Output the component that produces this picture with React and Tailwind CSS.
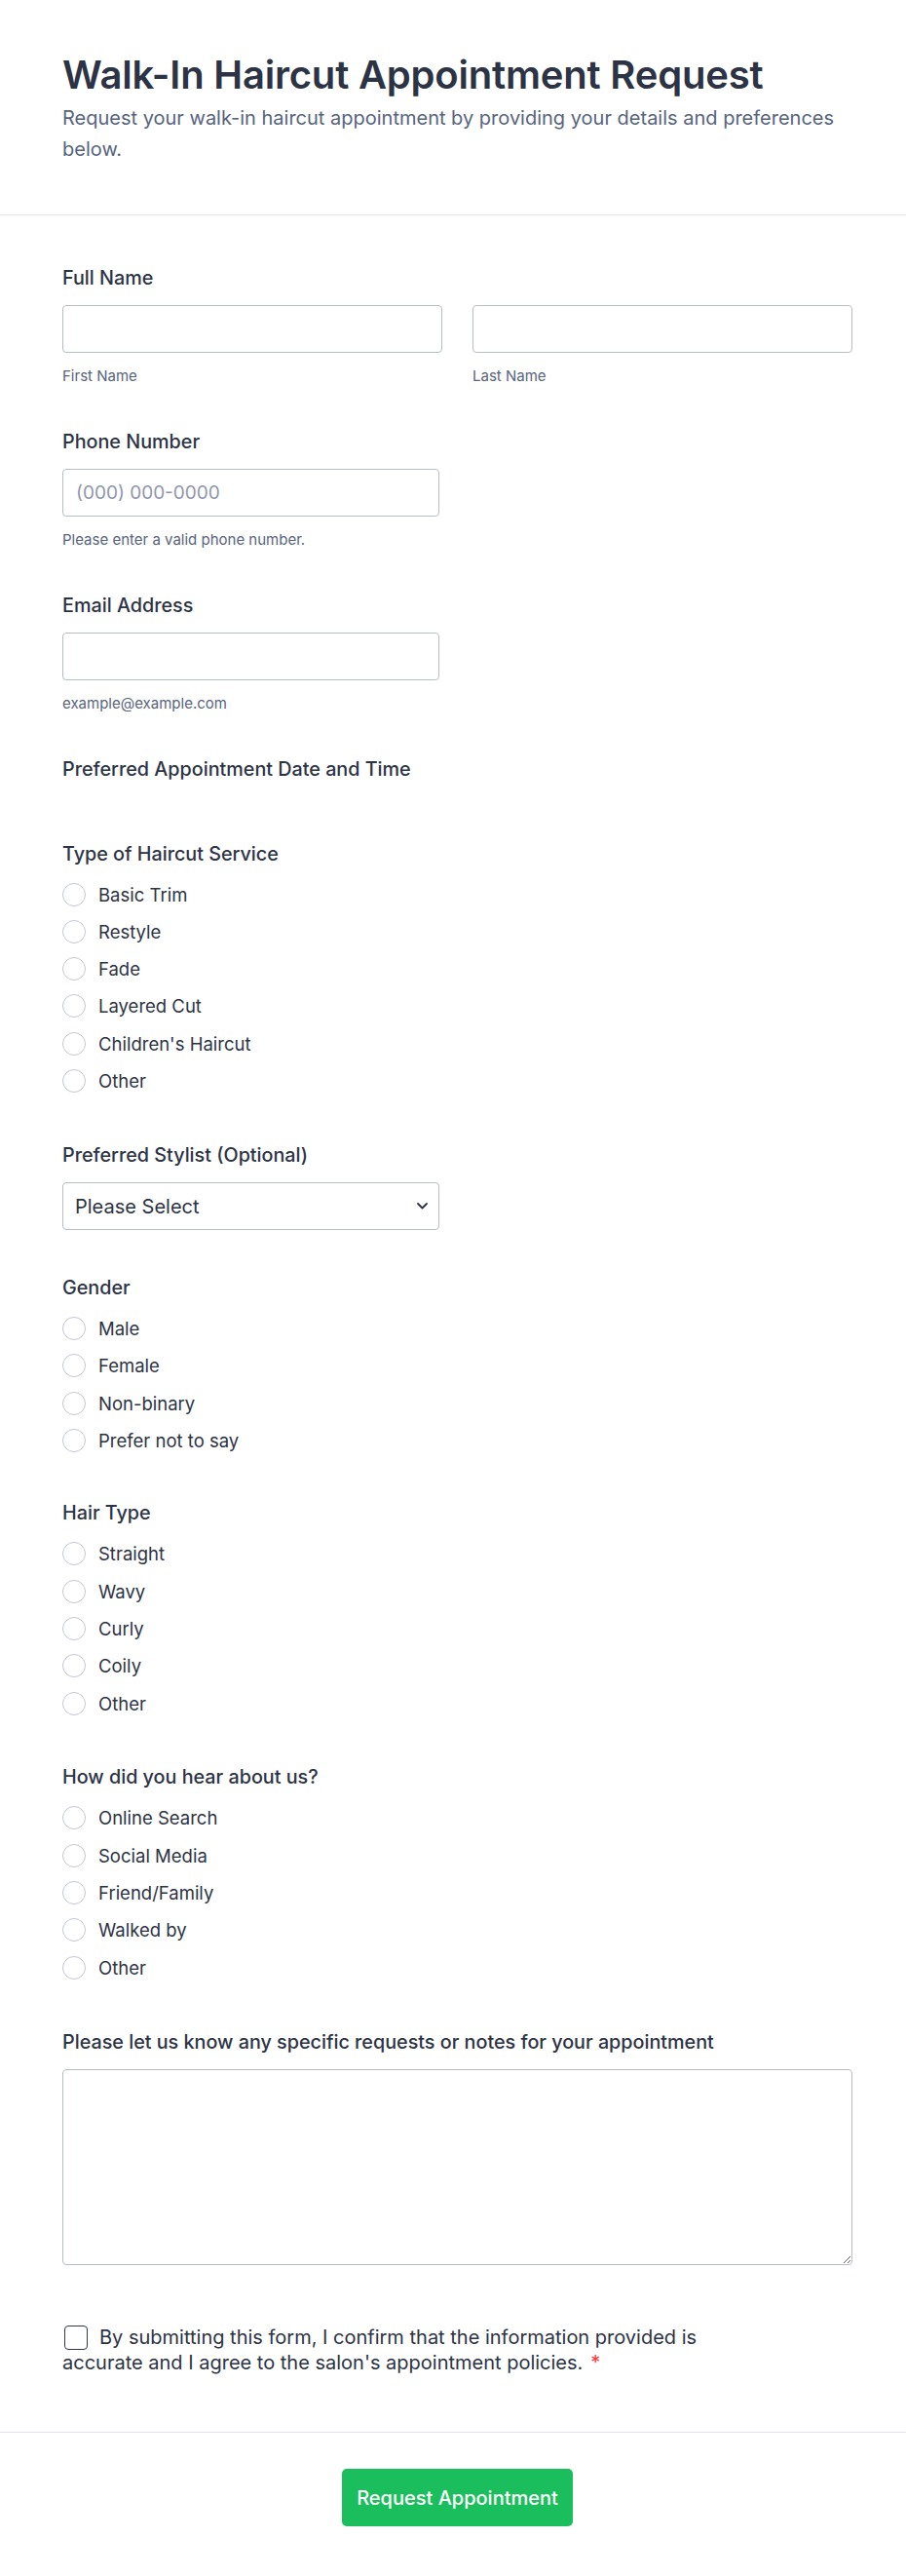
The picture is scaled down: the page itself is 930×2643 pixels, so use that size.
import React from "react";

function Radio({ label }) {
  return (
    <div className="flex items-center h-[24px]">
      <span className="w-[24px] h-[24px] rounded-full border-[1.5px] border-[#c3c8d4] bg-white shrink-0"></span>
      <span className="ml-[13px] text-[18.5px] leading-[24px] text-[#2c3345] whitespace-nowrap">{label}</span>
    </div>
  );
}

function RadioGroup({ options }) {
  return (
    <div className="flex flex-col gap-[14.3px] mt-[18px]">
      {options.map((o, i) => (
        <Radio key={i} label={o} />
      ))}
    </div>
  );
}

function Label({ children }) {
  return <div className="text-[19.75px] leading-[24px] font-medium text-[#2c3345]">{children}</div>;
}

function TextInput({ placeholder, className = "" }) {
  return (
    <input
      type="text"
      placeholder={placeholder}
      className={
        "block h-[49px] border border-[#b8bdc9] rounded-[4px] px-[13px] text-[19px] text-[#2c3345] placeholder:text-[#8f96ab] bg-white outline-none " +
        className
      }
    />
  );
}

function Sub({ children }) {
  return <div className="mt-[14px] text-[15px] leading-[20px] text-[#57647e]">{children}</div>;
}

export default function App() {
  return (
    <div className="min-h-[2643px] bg-white font-['Inter','Noto_Sans',sans-serif]">
      <header className="pt-[53px] pb-[51px] pl-[64px] pr-[55px] border-b border-[#e3e5eb]">
        <h1 className="text-[40px] leading-[48px] font-semibold text-[#2c3345] tracking-[-0.2px]">
          Walk-In Haircut Appointment Request
        </h1>
        <p className="mt-[4px] text-[20px] leading-[32px] text-[#57647e]">
          Request your walk-in haircut appointment by providing your details and preferences below.
        </p>
      </header>

      <main className="pl-[64px] pr-[55px] pt-[51.5px] pb-[58px]">
        {/* Full Name */}
        <div>
          <Label>Full Name</Label>
          <div className="mt-[16.5px] grid grid-cols-2 gap-[31px]">
            <div>
              <TextInput className="w-full" />
              <Sub>First Name</Sub>
            </div>
            <div>
              <TextInput className="w-full" />
              <Sub>Last Name</Sub>
            </div>
          </div>
        </div>

        {/* Phone */}
        <div className="mt-[44.5px]">
          <Label>Phone Number</Label>
          <div className="mt-[16.5px]">
            <TextInput placeholder="(000) 000-0000" className="w-[387px]" />
          </div>
          <Sub>Please enter a valid phone number.</Sub>
        </div>

        {/* Email */}
        <div className="mt-[44.5px]">
          <Label>Email Address</Label>
          <div className="mt-[16.5px]">
            <TextInput className="w-[387px]" />
          </div>
          <Sub>example@example.com</Sub>
        </div>

        {/* Date */}
        <div className="mt-[44.5px]">
          <Label>Preferred Appointment Date and Time</Label>
        </div>

        {/* Type */}
        <div className="mt-[63px]">
          <Label>Type of Haircut Service</Label>
          <div className="mt-[0.5px]">
            <RadioGroup
              options={["Basic Trim", "Restyle", "Fade", "Layered Cut", "Children's Haircut", "Other"]}
            />
          </div>
        </div>

        {/* Stylist */}
        <div className="mt-[52.5px]">
          <Label>Preferred Stylist (Optional)</Label>
          <div className="mt-[16px] w-[387px] h-[49px] border border-[#b8bdc9] rounded-[4px] flex items-center justify-between pl-[12px] pr-[11px] bg-white">
            <span className="text-[20px] text-[#2c3345]">Please Select</span>
            <svg width="11" height="7" viewBox="0 0 11 7" fill="none">
              <path d="M1 1l4.5 4.5L10 1" stroke="#2c3345" strokeWidth="1.8" strokeLinecap="round" strokeLinejoin="round" />
            </svg>
          </div>
        </div>

        {/* Gender */}
        <div className="mt-[46.5px]">
          <Label>Gender</Label>
          <div className="mt-[0.5px]">
            <RadioGroup options={["Male", "Female", "Non-binary", "Prefer not to say"]} />
          </div>
        </div>

        {/* Hair Type */}
        <div className="mt-[50.6px]">
          <Label>Hair Type</Label>
          <div className="mt-[0.5px]">
            <RadioGroup options={["Straight", "Wavy", "Curly", "Coily", "Other"]} />
          </div>
        </div>

        {/* How heard */}
        <div className="mt-[51.8px]">
          <Label>How did you hear about us?</Label>
          <div className="mt-[0.5px]">
            <RadioGroup options={["Online Search", "Social Media", "Friend/Family", "Walked by", "Other"]} />
          </div>
        </div>

        {/* Notes */}
        <div className="mt-[52.8px]">
          <Label>Please let us know any specific requests or notes for your appointment</Label>
          <textarea className="block mt-[15.5px] w-full h-[201px] border border-[#b8bdc9] rounded-[4px] bg-white outline-none p-[12px] text-[18px]"></textarea>
        </div>

        {/* Consent */}
        <p className="mt-[61.5px] text-[20px] leading-[26px] text-[#2c3345] max-w-[690px]">
          <span className="inline-block align-top mt-[0.5px] w-[24px] h-[25px] border-[1.5px] border-[#343a4d] rounded-[4px] mr-[12px] ml-[2px]"></span>
          By submitting this form, I confirm that the information provided is accurate and I agree to the salon's appointment policies.
          <span className="ml-[8px] text-[#f23a3c]">*</span>
        </p>
      </main>

      <footer className="border-t border-[#e3e5eb] pt-[37px] pb-[50px] pl-[64px] pr-[55px] flex justify-center">
        <button className="h-[59px] w-[237px] rounded-[5px] bg-[#1bbe5c] text-white text-[20px] font-medium">
          Request Appointment
        </button>
      </footer>
    </div>
  );
}
